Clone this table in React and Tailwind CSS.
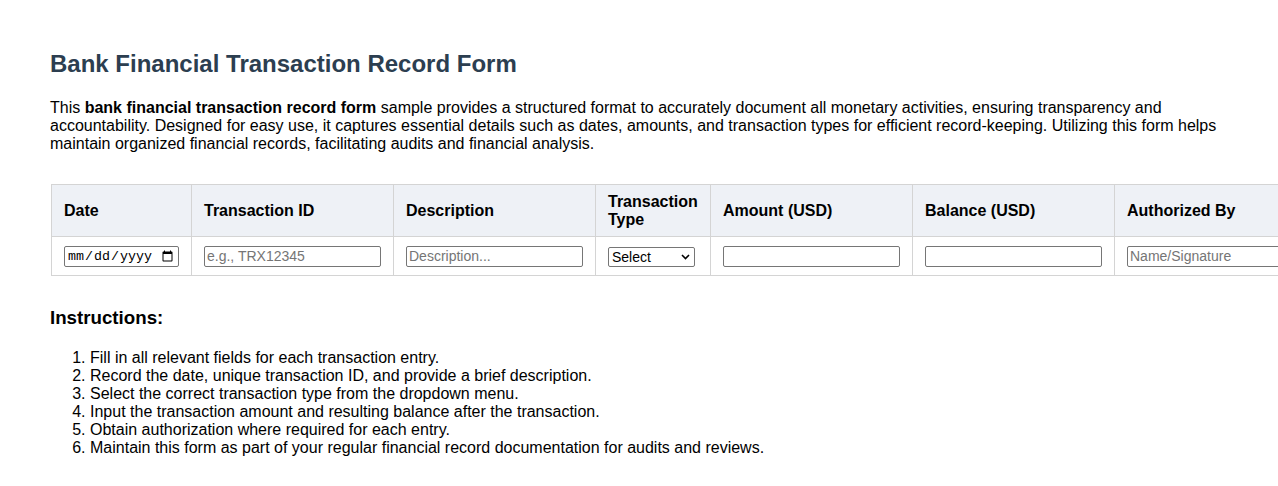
import React from "react";

const columns = [
  { label: "Date", w: "w-[140px]" },
  { label: "Transaction ID", w: "w-[202px]" },
  { label: "Description", w: "w-[202px]" },
  { label: "Transaction Type", w: "w-[115px]" },
  { label: "Amount (USD)", w: "w-[202px]" },
  { label: "Balance (USD)", w: "w-[202px]" },
  { label: "Authorized By", w: "w-[202px]" },
];

const steps = [
  "Fill in all relevant fields for each transaction entry.",
  "Record the date, unique transaction ID, and provide a brief description.",
  "Select the correct transaction type from the dropdown menu.",
  "Input the transaction amount and resulting balance after the transaction.",
  "Obtain authorization where required for each entry.",
  "Maintain this form as part of your regular financial record documentation for audits and reviews.",
];

const inputCls =
  "block w-full h-[21px] border border-[#767676] rounded-[2px] px-[2px] text-[14px] text-black bg-white placeholder:text-[#757575] outline-none";

const cell = "border border-[#d4d4d4] px-3 pt-[9px] pb-[8px] align-middle";

export default function App() {
  return (
    <div className="w-screen min-h-[486px] overflow-hidden bg-white text-black font-['Liberation_Sans',Arial,sans-serif]">
      <div className="px-[50px] pt-[50px] pb-8">
        <h2 className="text-[24px] leading-[28px] font-bold text-[#2c3e50]">
          Bank Financial Transaction Record Form
        </h2>

        <p className="mt-[21px] text-[16px] leading-[18px]">
          This <strong>bank financial transaction record form</strong> sample
          provides a structured format to accurately document all monetary
          activities, ensuring transparency and accountability. Designed for
          easy use, it captures essential details such as dates, amounts, and
          transaction types for efficient record-keeping. Utilizing this form
          helps maintain organized financial records, facilitating audits and
          financial analysis.
        </p>

        <table className="mt-[31px] ml-[1px] border-collapse border border-[#d4d4d4] table-fixed w-[1266px] max-w-none">
          <thead>
            <tr className="bg-[#eef1f6]">
              {columns.map((c) => (
                <th
                  key={c.label}
                  className={`${c.w} border border-[#d4d4d4] px-3 py-[7.5px] text-left align-middle text-[16px] leading-[18px] font-bold`}
                >
                  {c.label}
                </th>
              ))}
            </tr>
          </thead>
          <tbody>
            <tr>
              <td className={cell}>
                <input
                  type="date"
                  className="block w-[115px] h-[21px] border border-[#767676] rounded-[2px] px-[2px] text-[13.33px] font-['Liberation_Mono',monospace] bg-white"
                />
              </td>
              <td className={cell}>
                <input type="text" placeholder="e.g., TRX12345" className={inputCls} />
              </td>
              <td className={cell}>
                <input type="text" placeholder="Description..." className={inputCls} />
              </td>
              <td className={cell}>
                <div className="relative block w-[87px]">
                  <select className="block w-[87px] h-[20px] appearance-none border border-[#767676] rounded-[2px] pl-[3px] text-[14px] leading-[18px] bg-white text-black">
                    <option>Select</option>
                    <option>Deposit</option>
                    <option>Withdrawal</option>
                    <option>Transfer</option>
                  </select>
                  <svg
                    className="absolute right-[5px] top-[7px] pointer-events-none"
                    width="9"
                    height="6"
                    viewBox="0 0 9 6"
                  >
                    <path d="M1 1l3.5 3.5L8 1" fill="none" stroke="#000" strokeWidth="1.6" />
                  </svg>
                </div>
              </td>
              <td className={cell}>
                <input type="number" className={inputCls} />
              </td>
              <td className={cell}>
                <input type="number" className={inputCls} />
              </td>
              <td className={cell}>
                <input type="text" placeholder="Name/Signature" className={inputCls} />
              </td>
            </tr>
          </tbody>
        </table>

        <h3 className="mt-[31px] text-[18.72px] leading-[22px] font-bold">Instructions:</h3>

        <ol className="mt-[20px] list-decimal pl-[40px] text-[16px] leading-[18px]">
          {steps.map((s) => (
            <li key={s}>{s}</li>
          ))}
        </ol>
      </div>
    </div>
  );
}
